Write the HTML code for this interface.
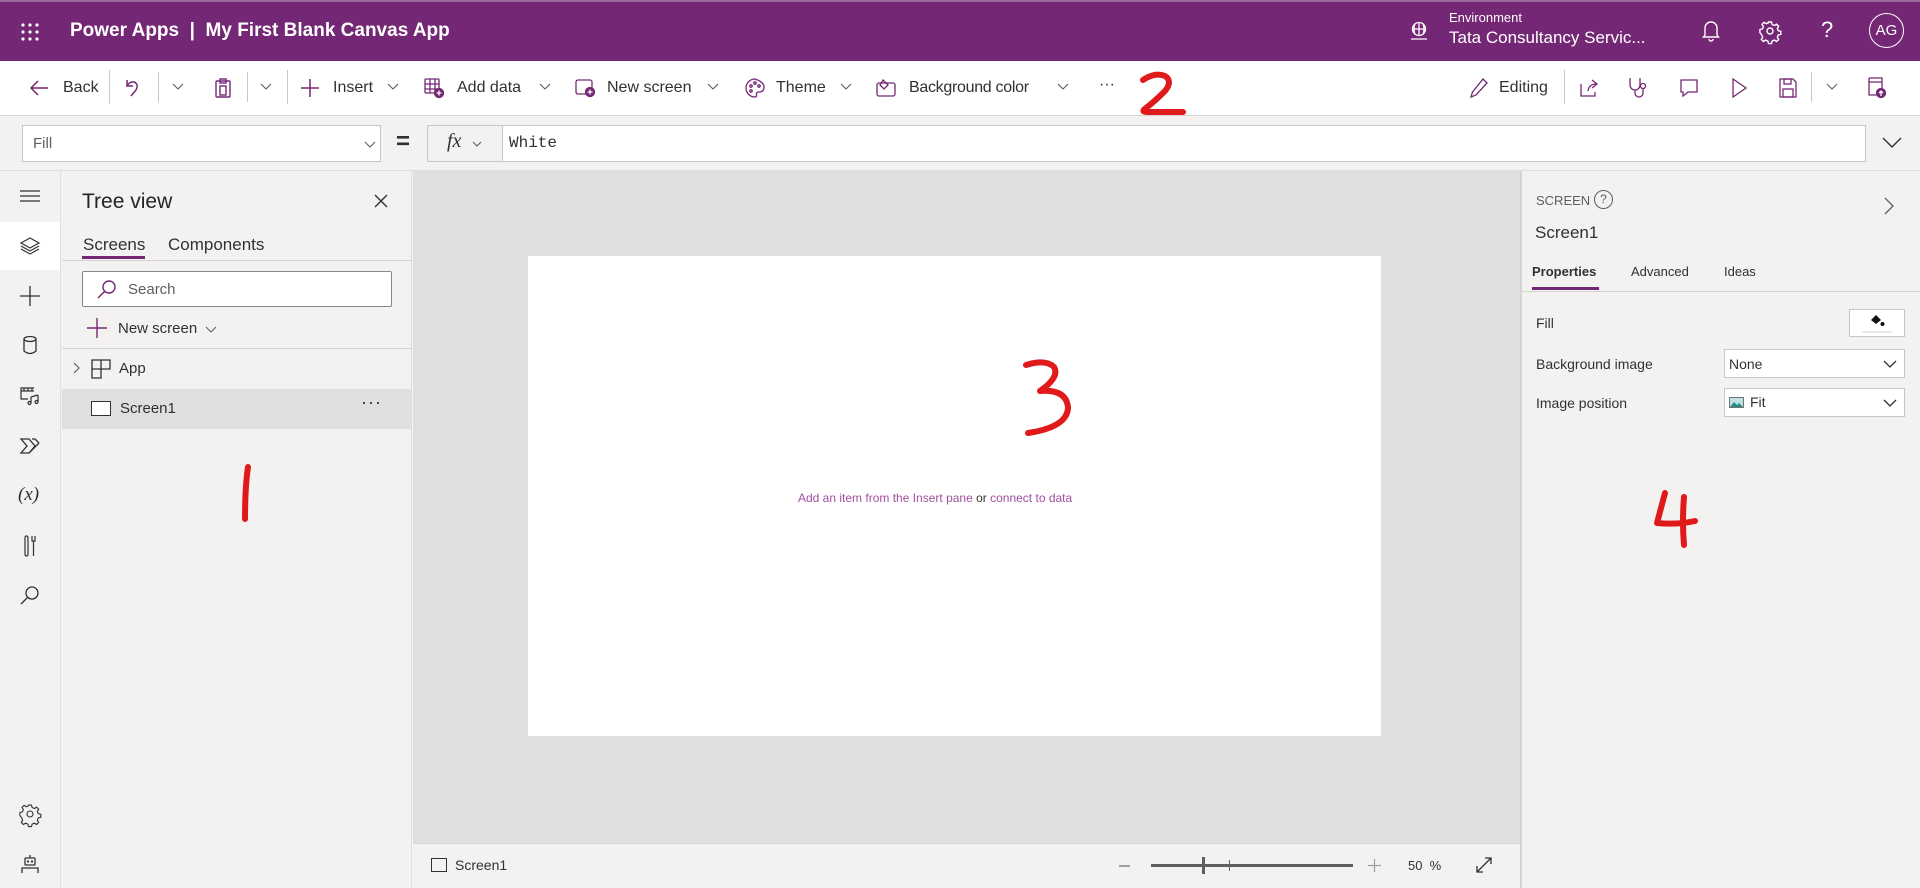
<!DOCTYPE html>
<html><head><meta charset="utf-8"><style>
*{box-sizing:border-box;margin:0;padding:0}
body{width:1920px;height:888px;overflow:hidden;font-family:"Liberation Sans",sans-serif;color:#323130;background:#f3f2f1;position:relative}
.a{position:absolute}
.t{position:absolute;white-space:nowrap}
svg{position:absolute;overflow:visible}
</style></head><body>
<!-- top bar -->
<div class="a" style="left:0;top:0;width:1920px;height:61px;background:#742774;border-top:2px solid #9a6a9a"></div>
<svg style="left:21px;top:23px" width="18" height="18" fill="#fff"><circle cx="2" cy="2" r="1.6"/><circle cx="9" cy="2" r="1.6"/><circle cx="16" cy="2" r="1.6"/><circle cx="2" cy="9" r="1.6"/><circle cx="9" cy="9" r="1.6"/><circle cx="16" cy="9" r="1.6"/><circle cx="2" cy="16" r="1.6"/><circle cx="9" cy="16" r="1.6"/><circle cx="16" cy="16" r="1.6"/></svg>
<div class="t" style="left:70px;top:20px;font-size:19px;color:#fff;font-weight:bold">Power Apps &nbsp;|&nbsp; My First Blank Canvas App</div>
<svg style="left:1409px;top:21px" width="20" height="20" fill="none" stroke="#fff" stroke-width="1.3"><circle cx="10" cy="8" r="6.5"/><path d="M3.5 8h13M10 1.5v13M6 2.5q-2 5.5 0 11M14 2.5q2 5.5 0 11M2 18h16"/></svg>
<div class="t" style="left:1449px;top:10px;font-size:13px;color:#fff">Environment</div>
<div class="t" style="left:1449px;top:28px;font-size:17px;color:#fff">Tata Consultancy Servic...</div>
<svg style="left:1701px;top:20px" width="20" height="22" fill="none" stroke="#fff" stroke-width="1.4"><path d="M4 15V8a6 6 0 0 1 12 0v7l1.5 2h-15z M8 19a2 2 0 0 0 4 0"/></svg>
<svg style="left:1760px;top:21px" width="20" height="20" fill="none" stroke="#fff" stroke-width="1.4"><circle cx="10" cy="10" r="3"/><path d="M8.5 1h3l.6 2.5 2.3 1 2.2-1.4 2.1 2.1-1.4 2.2 1 2.3 2.5.6v3l-2.5.6-1 2.3 1.4 2.2-2.1 2.1-2.2-1.4-2.3 1-.6 2.5h-3l-.6-2.5-2.3-1-2.2 1.4-2.1-2.1 1.4-2.2-1-2.3L-.1 11.5v-3l2.5-.6 1-2.3L2 3.4 4.1 1.3l2.2 1.4 2.3-1z"/></svg>
<div class="t" style="left:1821px;top:17px;font-size:22px;color:#fff">?</div>
<div class="a" style="left:1869px;top:13px;width:35px;height:35px;border:1.3px solid #fff;border-radius:50%;color:#fff;font-size:15px;text-align:center;line-height:33px">AG</div>
<!-- toolbar -->
<div class="a" style="left:0;top:61px;width:1920px;height:55px;background:#fff;border-bottom:1px solid #d6d4d2"></div>
<div style="position:absolute;top:78px;left:0;font-size:16px;color:#323130">
<svg style="left:30px;top:2px" width="18" height="16" fill="none" stroke="#742774" stroke-width="1.5"><path d="M8 1L1 8l7 7M1 8h17"/></svg>
<div class="t" style="left:63px;top:1px">Back</div>
<div class="a" style="left:109px;top:-8px;width:1px;height:34px;background:#c8c6c4"></div>
<svg style="left:125px;top:1px" width="16" height="18" fill="none" stroke="#742774" stroke-width="1.5"><path d="M2 1v6h6M2 7q3-5 7-4q5 2 2 8l-5 6"/></svg>
<div class="a" style="left:158px;top:-6px;width:1px;height:30px;background:#c8c6c4"></div>
<svg style="left:172px;top:5px" width="12" height="8" fill="none" stroke="#605e5c" stroke-width="1.1"><path d="M1 1l5 5 5-5"/></svg>
<svg style="left:215px;top:0" width="16" height="20" fill="none" stroke="#742774" stroke-width="1.4"><rect x="1" y="3" width="14" height="16" rx="1"/><rect x="5" y="1" width="6" height="4"/><rect x="5" y="8" width="6" height="9"/></svg>
<div class="a" style="left:247px;top:-6px;width:1px;height:30px;background:#c8c6c4"></div>
<svg style="left:260px;top:5px" width="12" height="8" fill="none" stroke="#605e5c" stroke-width="1.1"><path d="M1 1l5 5 5-5"/></svg>
<div class="a" style="left:287px;top:-8px;width:1px;height:34px;background:#c8c6c4"></div>
<svg style="left:301px;top:1px" width="18" height="18" fill="none" stroke="#742774" stroke-width="1.5"><path d="M9 0v18M0 9h18"/></svg>
<div class="t" style="left:333px;top:1px">Insert</div>
<svg style="left:387px;top:5px" width="12" height="8" fill="none" stroke="#605e5c" stroke-width="1.1"><path d="M1 1l5 5 5-5"/></svg>
<svg style="left:424px;top:0" width="20" height="20" fill="none" stroke="#742774" stroke-width="1.3"><rect x="1" y="1" width="14" height="14" rx="1"/><path d="M1 6h14M1 11h14M6 1v14M11 1v14"/><circle cx="15" cy="15" r="4.5" fill="#742774"/><path d="M15 12.5v5M12.5 15h5" stroke="#fff"/></svg>
<div class="t" style="left:457px;top:1px">Add data</div>
<svg style="left:539px;top:5px" width="12" height="8" fill="none" stroke="#605e5c" stroke-width="1.1"><path d="M1 1l5 5 5-5"/></svg>
<svg style="left:575px;top:1px" width="20" height="18" fill="none" stroke="#742774" stroke-width="1.3"><rect x="1" y="1" width="16" height="14" rx="2"/><circle cx="15" cy="13" r="4.5" fill="#742774"/><path d="M15 10.5v5M12.5 13h5" stroke="#fff"/></svg>
<div class="t" style="left:607px;top:1px">New screen</div>
<svg style="left:707px;top:5px" width="12" height="8" fill="none" stroke="#605e5c" stroke-width="1.1"><path d="M1 1l5 5 5-5"/></svg>
<svg style="left:745px;top:0" width="20" height="20" fill="none" stroke="#742774" stroke-width="1.3"><path d="M10 1a9 9 0 1 0 0 18q2 0 1.5-2.5T14 14q5 0 5-5T10 1z"/><circle cx="6" cy="8" r="1.2"/><circle cx="10" cy="5" r="1.2"/><circle cx="14" cy="8" r="1.2"/><circle cx="6" cy="13" r="1.2"/></svg>
<div class="t" style="left:776px;top:1px">Theme</div>
<svg style="left:840px;top:5px" width="12" height="8" fill="none" stroke="#605e5c" stroke-width="1.1"><path d="M1 1l5 5 5-5"/></svg>
<svg style="left:876px;top:0" width="20" height="20" fill="none" stroke="#742774" stroke-width="1.3"><rect x="1" y="5" width="18" height="13" rx="2"/><path d="M7 2l5 5-4 4-4-4z"/></svg>
<div class="t" style="left:909px;top:1px;letter-spacing:-0.3px">Background color</div>
<svg style="left:1057px;top:5px" width="12" height="8" fill="none" stroke="#605e5c" stroke-width="1.1"><path d="M1 1l5 5 5-5"/></svg>
<div class="t" style="left:1099px;top:-2px;font-size:16px">···</div>
<svg style="left:1470px;top:0" width="18" height="20" fill="none" stroke="#742774" stroke-width="1.3"><path d="M13 1l4 4L6 17l-5 2 1.5-5z"/></svg>
<div class="t" style="left:1499px;top:1px">Editing</div>
<div class="a" style="left:1564px;top:-8px;width:1px;height:34px;background:#c8c6c4"></div>
<svg style="left:1579px;top:0" width="20" height="20" fill="none" stroke="#742774" stroke-width="1.3"><path d="M2 6v12h14v-4M9 13q1-7 8-7M13 2l5 4-5 4"/></svg>
<svg style="left:1628px;top:-1px" width="20" height="22" fill="none" stroke="#742774" stroke-width="1.3"><path d="M2 1v7a5 5 0 0 0 10 0V1M7 13v3a4 4 0 0 0 8 0v-4"/><circle cx="15" cy="9" r="2.5"/></svg>
<svg style="left:1679px;top:0" width="20" height="20" fill="none" stroke="#742774" stroke-width="1.3"><path d="M2 2h16v12H9l-5 4v-4H2z"/></svg>
<svg style="left:1731px;top:0" width="16" height="20" fill="none" stroke="#742774" stroke-width="1.3"><path d="M2 1l13 9-13 9z"/></svg>
<svg style="left:1779px;top:0" width="18" height="20" fill="none" stroke="#742774" stroke-width="1.3"><path d="M1 1h13l3 3v15H1z"/><rect x="5" y="1" width="7" height="5"/><rect x="4" y="11" width="10" height="8"/></svg>
<div class="a" style="left:1811px;top:-6px;width:1px;height:30px;background:#c8c6c4"></div>
<svg style="left:1826px;top:5px" width="12" height="8" fill="none" stroke="#605e5c" stroke-width="1.1"><path d="M1 1l5 5 5-5"/></svg>
<svg style="left:1867px;top:-1px" width="20" height="22" fill="none" stroke="#742774" stroke-width="1.3"><path d="M2 1h13v10M2 1v17h8M2 5h13"/><circle cx="14" cy="16" r="4.5" fill="#742774"/><path d="M14 19v-5M12 16l2-2 2 2" stroke="#fff"/></svg>
</div>
<!-- formula bar -->
<div class="a" style="left:22px;top:125px;width:359px;height:37px;background:#fff;border:1px solid #c8c6c4"></div>
<div class="t" style="left:33px;top:135px;font-size:15px;color:#605e5c">Fill</div>
<svg style="left:364px;top:141px" width="12" height="8" fill="none" stroke="#605e5c" stroke-width="1.1"><path d="M1 1l5 5 5-5"/></svg>
<div class="t" style="left:396px;top:128px;font-size:24px;font-weight:bold">=</div>
<div class="a" style="left:427px;top:125px;width:76px;height:37px;background:#f3f2f1;border:1px solid #c8c6c4"></div>
<div class="t" style="left:447px;top:130px;font-size:20px;font-style:italic;font-family:'Liberation Serif',serif">fx</div>
<svg style="left:472px;top:141px" width="10" height="7" fill="none" stroke="#605e5c" stroke-width="1.1"><path d="M1 1l4 4 4-4"/></svg>
<div class="a" style="left:502px;top:125px;width:1364px;height:37px;background:#fff;border:1px solid #c8c6c4"></div>
<div class="t" style="left:509px;top:134px;font-size:16px;font-family:'Liberation Mono',monospace">White</div>
<svg style="left:1882px;top:137px" width="20" height="12" fill="none" stroke="#323130" stroke-width="1.4"><path d="M1 1l9 9 9-9"/></svg>
<div class="a" style="left:0;top:170px;width:1920px;height:1px;background:#e1dfdd"></div>
<!-- left rail -->
<div class="a" style="left:0;top:171px;width:61px;height:717px;background:#f3f2f1;border-right:1px solid #e1dfdd"></div>
<div class="a" style="left:0;top:222px;width:60px;height:48px;background:#fff"></div>
<svg style="left:20px;top:190px" width="20" height="12" fill="none" stroke="#323130" stroke-width="1.2"><path d="M0 1h20M0 6h20M0 11h20"/></svg>
<svg style="left:20px;top:237px" width="20" height="18" fill="none" stroke="#323130" stroke-width="1.2"><path d="M10 1l9 5-9 5-9-5z M1 9l9 5 9-5M1 12l9 5 9-5"/></svg>
<svg style="left:20px;top:286px" width="20" height="20" fill="none" stroke="#323130" stroke-width="1.3"><path d="M10 0v20M0 10h20"/></svg>
<svg style="left:23px;top:336px" width="14" height="18" fill="none" stroke="#323130" stroke-width="1.3"><ellipse cx="7" cy="3" rx="6" ry="2.5"/><path d="M1 3v12q6 5 12 0V3"/></svg>
<svg style="left:20px;top:386px" width="20" height="20" fill="none" stroke="#323130" stroke-width="1.2"><path d="M14 2H1v11h7M1 5h13M1 2v11M4 2v3M8 2v3M12 2v3"/><path d="M11 11v6M18 9v7M11 11l7-2"/><circle cx="9.5" cy="17" r="1.5"/><circle cx="16.5" cy="16" r="1.5"/></svg>
<svg style="left:20px;top:438px" width="20" height="16" fill="none" stroke="#323130" stroke-width="1.3"><path d="M1 1h8l6 7-6 7H1l6-7z M9 15l10-10M12 1h3l4 4"/></svg>
<div class="t" style="left:18px;top:484px;font-size:19px;font-family:'Liberation Serif',serif;font-style:italic">(x)</div>
<svg style="left:24px;top:535px" width="12" height="22" fill="none" stroke="#323130" stroke-width="1.2"><rect x="1" y="1" width="3" height="20" rx="1.5"/><path d="M8 1v5h3V1M9.5 6v15"/></svg>
<svg style="left:20px;top:585px" width="20" height="20" fill="none" stroke="#323130" stroke-width="1.3"><circle cx="12" cy="8" r="6"/><path d="M8 12L1 19"/></svg>
<svg style="left:20px;top:804px" width="20" height="20" fill="none" stroke="#323130" stroke-width="1.1"><circle cx="10" cy="10" r="3"/><path d="M8.5 1h3l.6 2.5 2.3 1 2.2-1.4 2.1 2.1-1.4 2.2 1 2.3 2.5.6v3l-2.5.6-1 2.3 1.4 2.2-2.1 2.1-2.2-1.4-2.3 1-.6 2.5h-3l-.6-2.5-2.3-1-2.2 1.4-2.1-2.1 1.4-2.2-1-2.3L-.1 11.5v-3l2.5-.6 1-2.3L2 3.4 4.1 1.3l2.2 1.4 2.3-1z"/></svg>
<svg style="left:21px;top:855px" width="18" height="20" fill="none" stroke="#323130" stroke-width="1.3"><path d="M9 0v3"/><rect x="4" y="3" width="10" height="7" rx="1"/><path d="M1 18v-5h16v5"/><circle cx="7" cy="6.5" r=".5" fill="#323130"/><circle cx="11" cy="6.5" r=".5" fill="#323130"/></svg>
<!-- tree panel -->
<div class="a" style="left:62px;top:171px;width:350px;height:717px;background:#f3f2f1;border-right:1px solid #e1dfdd"></div>
<div class="t" style="left:82px;top:190px;font-size:21px;color:#252423">Tree view</div>
<svg style="left:374px;top:194px" width="14" height="14" fill="none" stroke="#323130" stroke-width="1.4"><path d="M1 1l12 12M13 1L1 13"/></svg>
<div class="t" style="left:83px;top:235px;font-size:17px">Screens</div>
<div class="t" style="left:168px;top:235px;font-size:17px">Components</div>
<div class="a" style="left:82px;top:256px;width:63px;height:3px;background:#742774"></div>
<div class="a" style="left:62px;top:260px;width:350px;height:1px;background:#d6d4d2"></div>
<div class="a" style="left:82px;top:271px;width:310px;height:36px;background:#fff;border:1px solid #8a8886;border-radius:2px"></div>
<svg style="left:97px;top:280px" width="20" height="18" fill="none" stroke="#742774" stroke-width="1.4"><circle cx="12" cy="7" r="6"/><path d="M8 11L1 18"/></svg>
<div class="t" style="left:128px;top:281px;font-size:15px;color:#605e5c">Search</div>
<svg style="left:87px;top:318px" width="20" height="20" fill="none" stroke="#742774" stroke-width="1.4"><path d="M10 0v20M0 10h20"/></svg>
<div class="t" style="left:118px;top:320px;font-size:15px">New screen</div>
<svg style="left:205px;top:326px" width="12" height="8" fill="none" stroke="#605e5c" stroke-width="1.1"><path d="M1 1l5 5 5-5"/></svg>
<div class="a" style="left:62px;top:348px;width:350px;height:1px;background:#d6d4d2"></div>
<svg style="left:73px;top:362px" width="7" height="12" fill="none" stroke="#605e5c" stroke-width="1.1"><path d="M1 1l5 5-5 5"/></svg>
<svg style="left:91px;top:359px" width="20" height="20" fill="none" stroke="#323130" stroke-width="1.3"><path d="M1 1h18v9H1zM1 10v9h9V1"/></svg>
<div class="t" style="left:119px;top:360px;font-size:15px">App</div>
<div class="a" style="left:62px;top:389px;width:350px;height:40px;background:#e1dfdd"></div>
<div class="a" style="left:91px;top:401px;width:20px;height:15px;border:1.3px solid #323130;background:#fff"></div>
<div class="t" style="left:120px;top:400px;font-size:15px">Screen1</div>
<div class="t" style="left:361px;top:392px;font-size:18px;letter-spacing:1px">···</div>
<!-- canvas -->
<div class="a" style="left:413px;top:171px;width:1107px;height:672px;background:#e1dfdd"></div>
<div class="a" style="left:528px;top:256px;width:853px;height:480px;background:#fff"></div>
<div class="t" style="left:798px;top:491px;font-size:12px;color:#a050a0">Add an item from the Insert pane <span style="color:#323130">or</span> connect to data</div>
<!-- bottom bar -->
<div class="a" style="left:413px;top:843px;width:1107px;height:45px;background:#f3f2f1;border-top:1px solid #d6d4d2"></div>
<div class="a" style="left:431px;top:858px;width:16px;height:14px;border:1.2px solid #323130"></div>
<div class="t" style="left:455px;top:857px;font-size:14px">Screen1</div>
<div class="a" style="left:1119px;top:865px;width:11px;height:1.5px;background:#a19f9d"></div>
<div class="a" style="left:1151px;top:864px;width:202px;height:3px;background:#605e5c"></div>
<div class="a" style="left:1202px;top:857px;width:3px;height:17px;background:#605e5c"></div>
<div class="a" style="left:1229px;top:860px;width:1px;height:11px;background:#605e5c"></div>
<svg style="left:1368px;top:859px" width="13" height="13" fill="none" stroke="#a19f9d" stroke-width="1.2"><path d="M6.5 0v13M0 6.5h13"/></svg>
<div class="t" style="left:1408px;top:858px;font-size:13px">50 &nbsp;%</div>
<svg style="left:1476px;top:857px" width="16" height="16" fill="none" stroke="#323130" stroke-width="1.3"><path d="M1 15L15 1M9 1h6v6M1 9v6h6"/></svg>
<!-- right panel -->
<div class="a" style="left:1520px;top:171px;width:400px;height:717px;background:#f3f2f1;border-left:2px solid #d6d4d2"></div>
<div class="t" style="left:1536px;top:193px;font-size:13px;color:#605e5c">SCREEN</div>
<div class="a" style="left:1594px;top:190px;width:19px;height:19px;border:1.2px solid #605e5c;border-radius:50%;font-size:12px;text-align:center;line-height:17px;color:#605e5c">?</div>
<svg style="left:1884px;top:197px" width="10" height="18" fill="none" stroke="#605e5c" stroke-width="1.3"><path d="M1 1l8 8-8 8"/></svg>
<div class="t" style="left:1535px;top:223px;font-size:17px">Screen1</div>
<div class="t" style="left:1532px;top:264px;font-size:13px;font-weight:bold">Properties</div>
<div class="t" style="left:1631px;top:264px;font-size:13px">Advanced</div>
<div class="t" style="left:1724px;top:264px;font-size:13px">Ideas</div>
<div class="a" style="left:1532px;top:287px;width:67px;height:3px;background:#742774"></div>
<div class="a" style="left:1522px;top:291px;width:398px;height:1px;background:#d6d4d2"></div>
<div class="t" style="left:1536px;top:315px;font-size:14px">Fill</div>
<div class="a" style="left:1849px;top:309px;width:56px;height:28px;background:#fff;border:1px solid #c8c6c4"></div>
<svg style="left:1869px;top:313px" width="16" height="14" fill="#111"><path d="M2 7l5-5 5 5-5 4z"/><circle cx="13.5" cy="11" r="2"/></svg>
<div class="a" style="left:1862px;top:331px;width:30px;height:2px;background:#e8e8e8"></div>
<div class="t" style="left:1536px;top:356px;font-size:14px">Background image</div>
<div class="a" style="left:1724px;top:349px;width:181px;height:29px;background:#fff;border:1px solid #c8c6c4"></div>
<div class="t" style="left:1729px;top:356px;font-size:14px">None</div>
<svg style="left:1883px;top:360px" width="14" height="8" fill="none" stroke="#323130" stroke-width="1.3"><path d="M1 1l6 6 6-6"/></svg>
<div class="t" style="left:1536px;top:395px;font-size:14px">Image position</div>
<div class="a" style="left:1724px;top:388px;width:181px;height:29px;background:#fff;border:1px solid #c8c6c4"></div>
<svg style="left:1729px;top:397px" width="15" height="11"><rect x=".5" y=".5" width="14" height="10" fill="#bfe3e3" stroke="#555" stroke-width=".8"/><path d="M1 10l4-5 3 3 2-2 4 4z" fill="#2a8a8a"/></svg>
<div class="t" style="left:1750px;top:394px;font-size:14px">Fit</div>
<svg style="left:1883px;top:399px" width="14" height="8" fill="none" stroke="#323130" stroke-width="1.3"><path d="M1 1l6 6 6-6"/></svg>
<!-- red annotations -->
<svg style="left:0;top:0" width="1920" height="888" fill="none" stroke="#e0191b" stroke-width="6" stroke-linecap="round" stroke-linejoin="round">
<path d="M1143 80q12-8 22-4q8 5 0 15q-10 10-19 17q-6 4 2 4q20 0 35 0"/>
<path d="M248 467q-3 20-3 52"/>
<path d="M1026 365q20-6 28 2q6 10-14 24q26-2 28 16q0 20-40 26"/>
<path d="M1665 493l-8 30q20 2 38-2M1684 497q-2 25 0 48"/>
</svg>
</body></html>
